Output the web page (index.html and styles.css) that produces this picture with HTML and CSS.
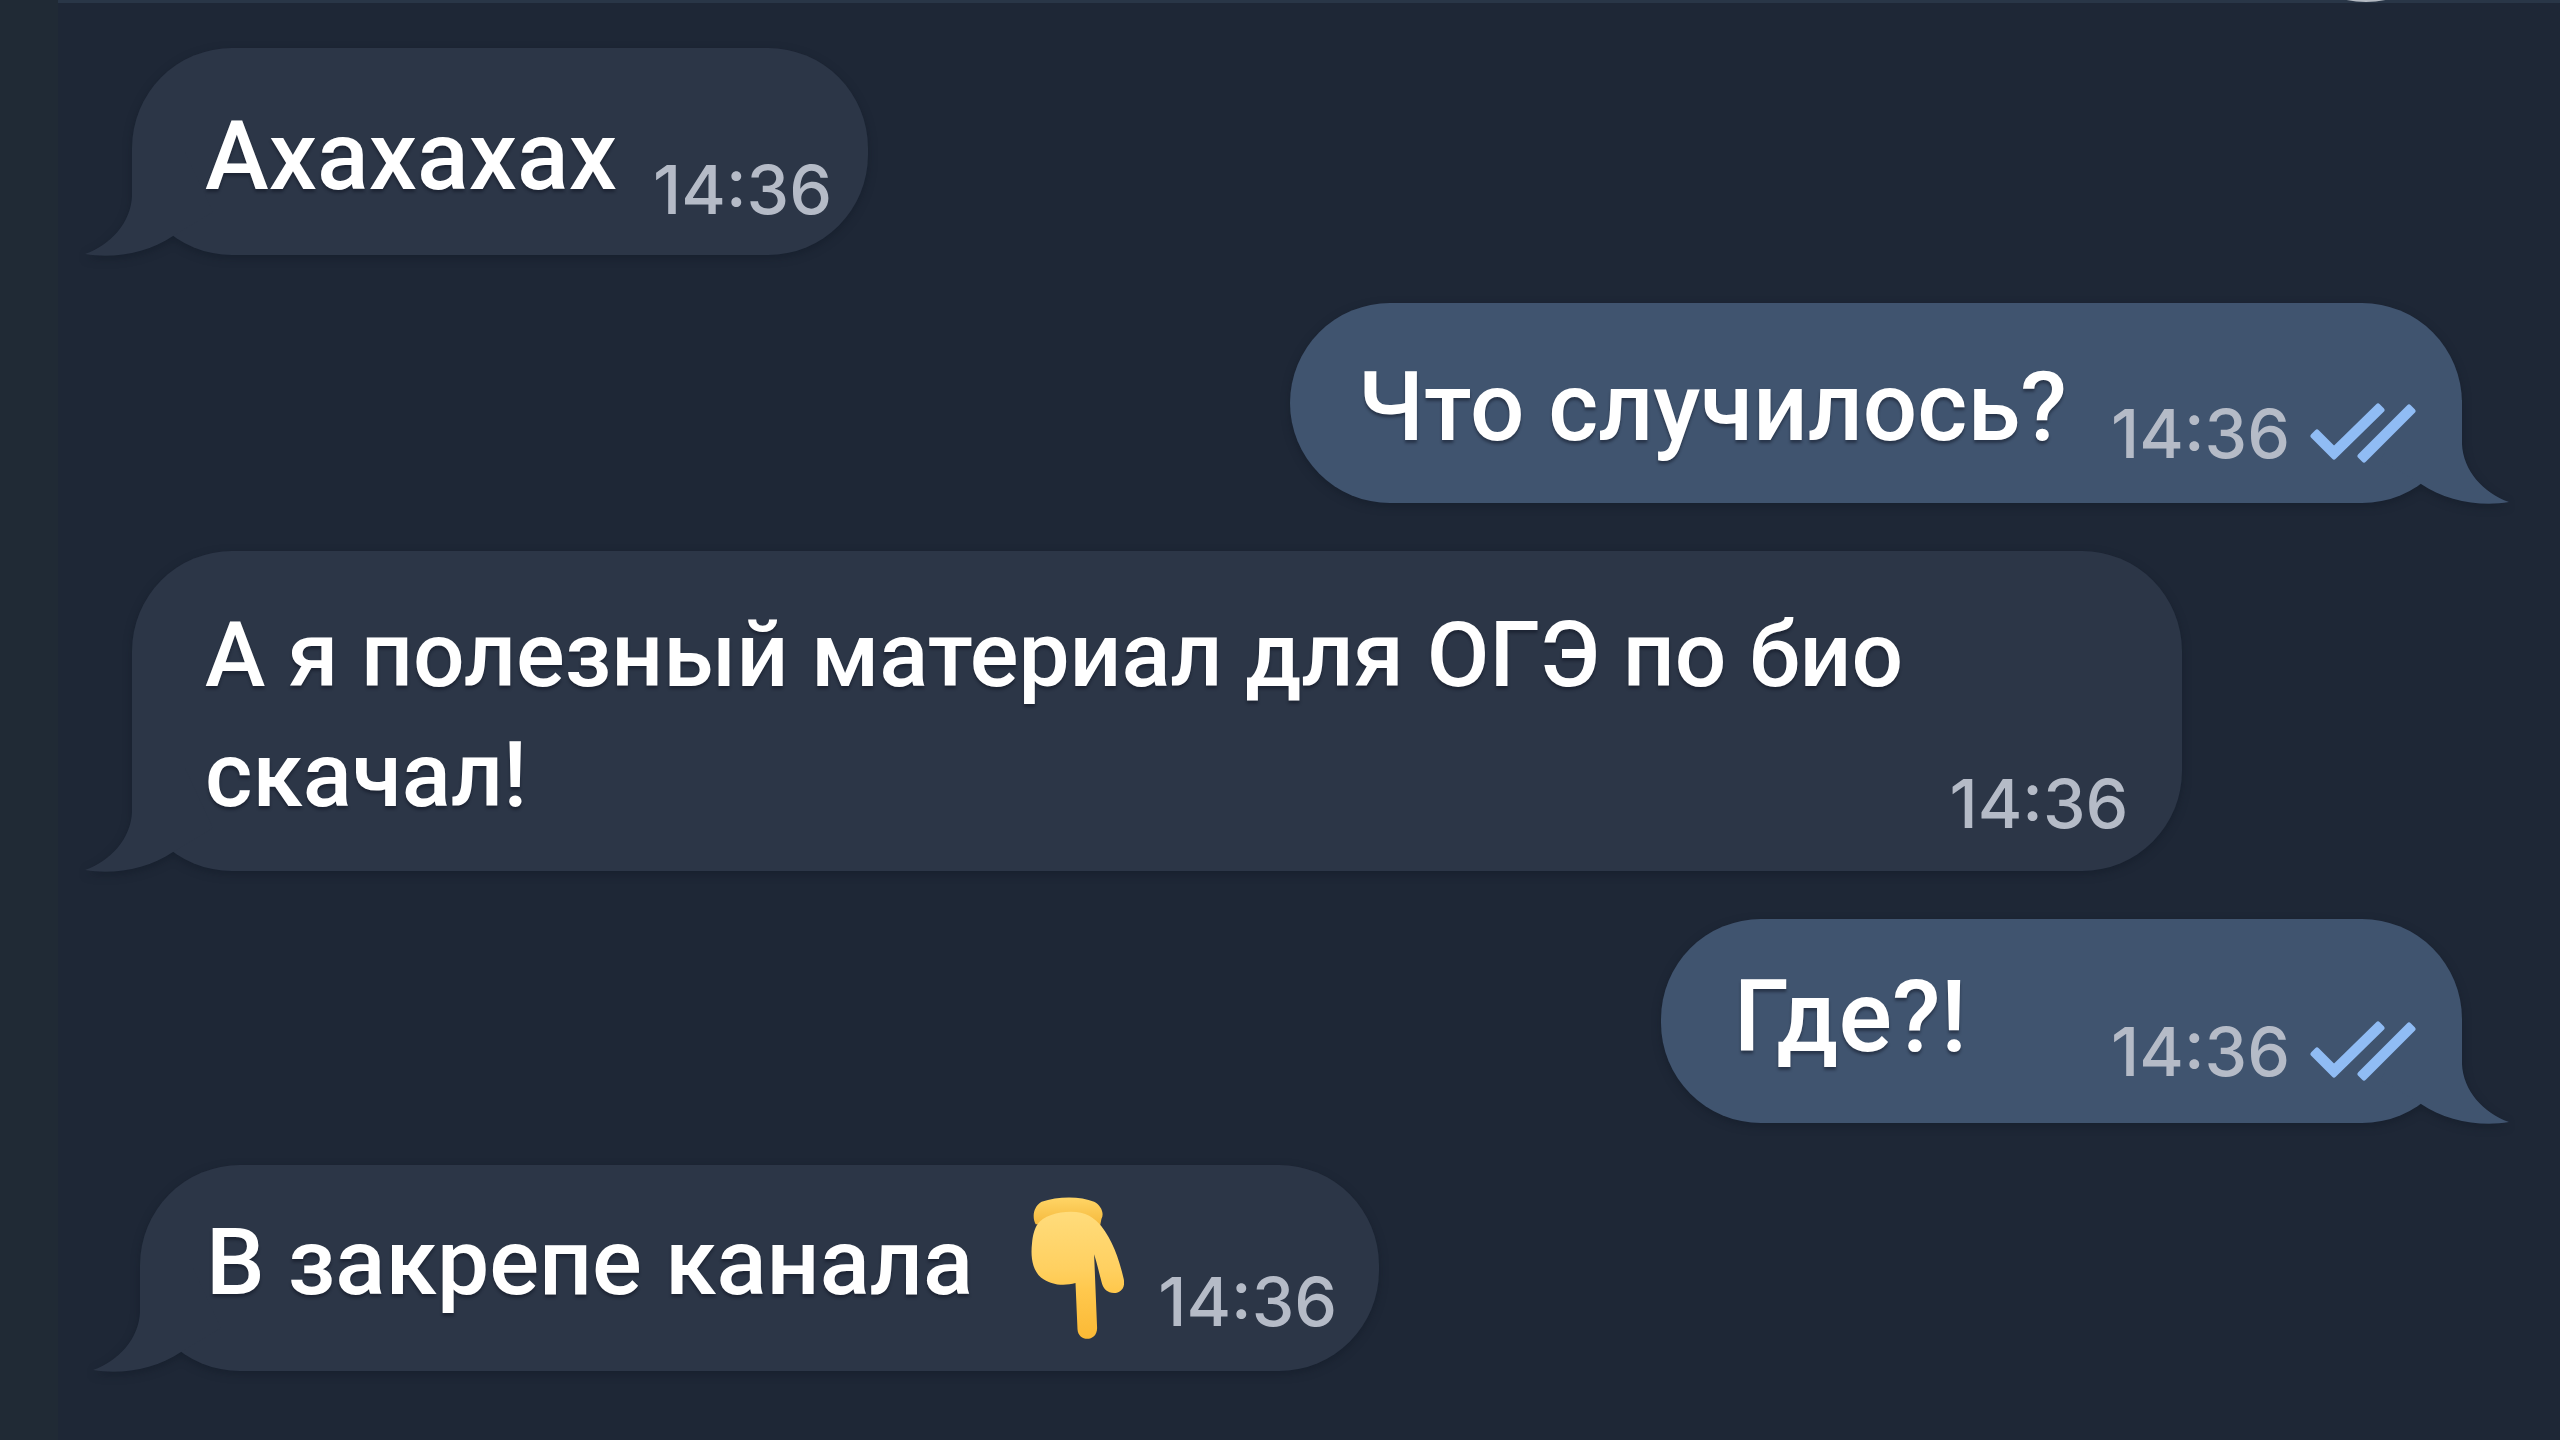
FILE: index.html
```html
<!DOCTYPE html>
<html lang="ru">
<head>
<meta charset="utf-8">
<meta name="viewport" content="width=device-width, initial-scale=1">
<title>Чат</title>
<link rel="stylesheet" href="styles.css">
</head>
<body>
<svg class="symbols" aria-hidden="true">
  <symbol id="tail" viewBox="0 0 132 110">
    <path d="M49 0V44C48 70 28 93 2 102C30 107 66 101 90 84L130 60L102 0Z"/>
  </symbol>
  <symbol id="read" viewBox="0 0 110 60">
    <path d="M3 33L7 29L24 46L68 3L72 7L24 54Z"/>
    <path d="M50 53L99 4L103 8L54 57Z"/>
  </symbol>
</svg>
<main class="chat">
  <div class="avatar-edge"></div>
  <article class="bubble incoming roomy">
    <p class="text">Ахахахах</p>
    <div class="meta"><time>14:36</time></div>
    <svg class="tail" aria-hidden="true"><use href="#tail"/></svg>
  </article>
  <article class="bubble outgoing">
    <p class="text">Что случилось?</p>
    <div class="meta"><time>14:36</time><svg class="read" role="img" aria-label="Прочитано"><use href="#read"/></svg></div>
    <svg class="tail" aria-hidden="true"><use href="#tail"/></svg>
  </article>
  <article class="bubble incoming long">
    <p class="text">А я полезный материал для ОГЭ по био скачал!</p>
    <div class="meta"><time>14:36</time></div>
    <svg class="tail" aria-hidden="true"><use href="#tail"/></svg>
  </article>
  <article class="bubble outgoing short">
    <p class="text">Где?!</p>
    <div class="meta"><time>14:36</time><svg class="read" role="img" aria-label="Прочитано"><use href="#read"/></svg></div>
    <svg class="tail" aria-hidden="true"><use href="#tail"/></svg>
  </article>
  <article class="bubble incoming last">
    <p class="text">В закрепе канала</p>
    <svg class="hand" viewBox="0 0 280 427" role="img" aria-label="Указательный палец вниз">
      <defs>
        <linearGradient id="skin" x1="0" y1="0" x2="0" y2="1">
          <stop offset="0" stop-color="#ffdc7c"/>
          <stop offset=".45" stop-color="#ffd060"/>
          <stop offset=".62" stop-color="#ffc84d"/>
          <stop offset="1" stop-color="#fbb935"/>
        </linearGradient>
        <linearGradient id="cuff" x1="0" y1="0" x2="0" y2="1">
          <stop offset="0" stop-color="#ffd566"/>
          <stop offset="1" stop-color="#f5b93c"/>
        </linearGradient>
      </defs>
      <path fill="url(#cuff)" d="M14 82C2 58 8 28 32 14C80-3 148-4 190 14C210 24 222 48 212 66L208 86Z"/>
      <path fill="url(#skin)" d="M18 84C36 56 80 44 120 44C164 44 192 62 212 88C243 128 264 180 279 246C285 274 270 288 250 289C230 289 218 276 213 258C205 228 198 196 190 172L199 394C199 437 142 437 140 398L134 259C100 268 60 266 30 242C2 216 -1 176 3 140C5 115 10 98 18 84Z"/>
    </svg>
    <div class="meta"><time>14:36</time></div>
    <svg class="tail" aria-hidden="true"><use href="#tail"/></svg>
  </article>
</main>
</body>
</html>
```
FILE: styles.css
```css
* {
  box-sizing: border-box;
}

body {
  margin: 0;
  background: #202a35;
  font-family: Roboto, "Noto Sans", sans-serif;
}

.symbols {
  display: block;
  width: 0;
  height: 0;
}

.chat {
  position: relative;
  display: flex;
  flex-direction: column;
  align-items: flex-start;
  gap: 48px;
  min-height: 100vh;
  margin-left: 58px;
  padding: 48px 98px 48px 74px;
  background: #1e2736;
  box-shadow: inset 0 3px #293647;
  overflow: hidden;
}

.avatar-edge {
  position: absolute;
  top: -198px;
  right: 94px;
  width: 200px;
  height: 200px;
  border-radius: 50%;
  background: #b4bac2;
}

.bubble {
  position: relative;
  display: flex;
  align-items: flex-start;
  max-width: 88%;
  padding-left: 73px;
  border-radius: 100px;
  filter: drop-shadow(0 3px 5px rgb(10 16 28 / 35%));
}

.incoming {
  --fill: #2c3647;
  background: var(--fill);
  padding-right: 36px;
}

.outgoing {
  --fill: #40546f;
  align-self: flex-end;
  background: var(--fill);
  padding-right: 42px;
  padding-left: 68px;
}

.text {
  margin: 0;
  padding: 44px 0 36px;
  color: #fff;
  font-size: 96px;
  font-weight: 500;
  line-height: 120px;
  text-shadow: 0 3px 3px rgb(10 16 28 / 45%);
}

.meta {
  display: flex;
  align-self: flex-end;
  align-items: center;
  gap: 20px;
  margin-left: 36px;
  padding-bottom: 28px;
  color: #b5bbc7;
  font-family: Inter, sans-serif;
  font-size: 68px;
  font-weight: 500;
  line-height: 80px;
}

.outgoing .meta {
  margin-left: 44px;
  padding-bottom: 30px;
}

.roomy .text {
  padding: 48px 0 39px;
}

.roomy .meta {
  padding-bottom: 26px;
}

.long {
  padding-right: 54px;
}

.long .text {
  font-size: 91px;
}

.short {
  padding-left: 73px;
}

.short .text,
.last .text {
  padding: 38px 0 46px;
}

.short .text {
  font-size: 100px;
}

.outgoing.short .meta {
  margin-left: 144px;
  padding-bottom: 32px;
}

.last {
  margin-left: 8px;
  margin-top: -6px;
  padding-left: 66px;
  padding-right: 42px;
}

.last .text {
  padding: 38px 0 48px;
  font-size: 93px;
}

.last .meta {
  margin-left: 34px;
  padding-bottom: 30px;
}

.read {
  flex: none;
  width: 110px;
  height: 60px;
  fill: #90bcf4;
  stroke: #90bcf4;
  stroke-width: 5px;
  stroke-linejoin: round;
}

.hand {
  flex: none;
  width: 93px;
  height: 142px;
  margin: 32px 0 0 58px;
}

.tail {
  position: absolute;
  z-index: -1;
  bottom: -7px;
  left: -49px;
  width: 132px;
  height: 110px;
  fill: var(--fill);
}

.outgoing .tail {
  left: auto;
  right: -49px;
  transform: scaleX(-1);
}
```
